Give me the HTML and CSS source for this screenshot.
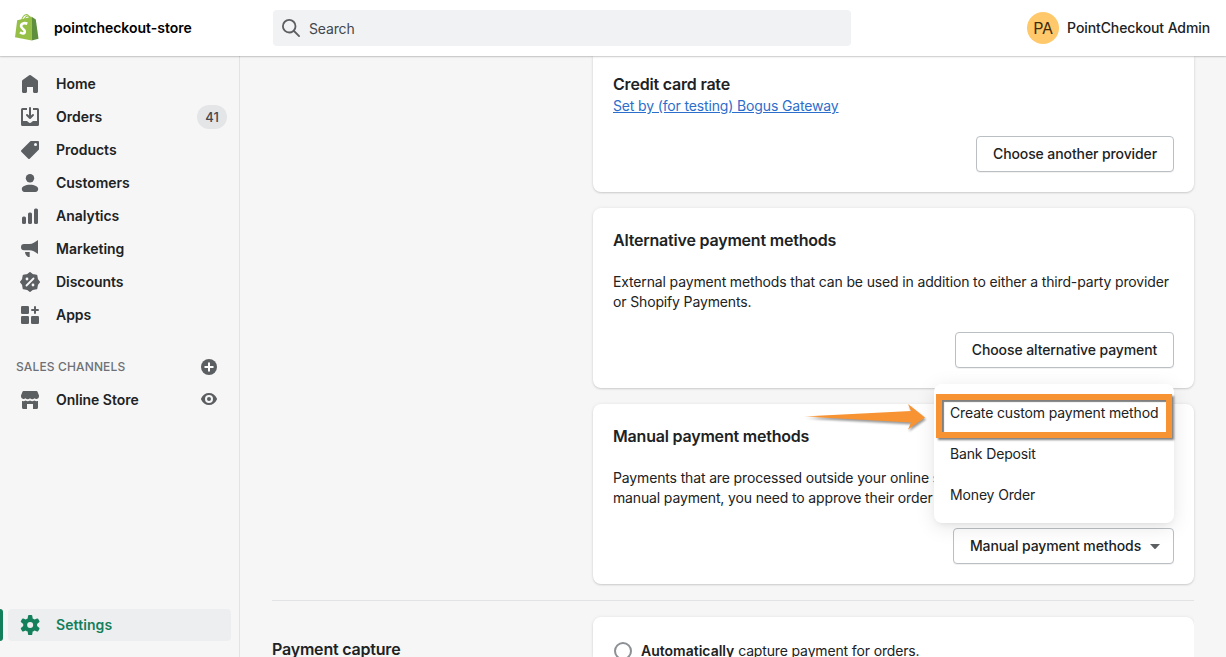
FILE: index.html
```html
<!DOCTYPE html>
<html lang="en">
<head>
<meta charset="utf-8">
<title>Payments settings</title>
<link rel="stylesheet" href="styles.css">
</head>
<body>
<header class="topbar">
  <div class="brand">
    <svg class="logo" viewBox="0 0 24 28">
      <path d="M6.500 8C7 4 9.500 1.500 11.500 1.500C13.500 1.500 14.500 4 14.500 7.500M9 8C9.500 4.500 11.500 2.500 13.500 3C15.500 3.300 16 5 16.200 7" fill="none" stroke="#95bf47" stroke-width="1.100"/>
      <path d="M2.200 7.200L16.700 3.800V27.500L0 24.300Z" fill="#95bf47"/>
      <path d="M16.700 3.800L20.800 6.400L23.500 25.800L16.700 27.500Z" fill="#5e8e3e"/>
      <path d="M12.300 10.700C8.600 9 5.700 11.200 6.200 13.600C6.700 16 10 16.200 9.800 18.700C9.600 21 7 20.900 5 19.300" fill="none" stroke="#fff" stroke-width="2.600"/>
    </svg>
    <span class="store-name">pointcheckout-store</span>
  </div>
  <div class="search">
    <svg class="icon" viewBox="0 0 20 20"><path fill-rule="evenodd" d="M2 8a6 6 0 1 1 12 0A6 6 0 0 1 2 8zm17.707 10.293-5.395-5.396A7.946 7.946 0 0 0 16 8a8 8 0 1 0-8 8 7.954 7.954 0 0 0 4.897-1.688l5.396 5.395A.998.998 0 0 0 20 19a1 1 0 0 0-.293-.707z"/></svg>
    <span class="search-text">Search</span>
  </div>
  <div class="user"><span class="avatar">PA</span><span class="user-name">PointCheckout Admin</span></div>
</header>
<div class="frame">
  <nav class="sidebar">
    <a class="item"><svg class="icon" viewBox="0 0 20 20"><path d="M18 7.261V17.500c0 .841-.672 1.500-1.500 1.500h-2c-.828 0-1.500-.659-1.500-1.500V13H7v4.477C7 18.318 6.328 19 5.500 19h-2c-.828 0-1.500-.682-1.500-1.523V7.261a1.500 1.500 0 0 1 .615-1.210l6.590-4.820a1.481 1.481 0 0 1 1.590 0l6.590 4.820A1.500 1.500 0 0 1 18 7.260z"/></svg><span>Home</span></a>
    <a class="item"><svg class="icon" viewBox="0 0 20 20"><path d="M11 1a1 1 0 1 0-2 0v7.586L7.707 7.293a1 1 0 0 0-1.414 1.414l3 3a1 1 0 0 0 1.414 0l3-3a1 1 0 0 0-1.414-1.414L11 8.586V1z"/><path d="M3 14V3h4V1H2.500A1.500 1.500 0 0 0 1 2.500v15A1.500 1.500 0 0 0 2.500 19h15a1.500 1.500 0 0 0 1.500-1.500v-15A1.500 1.500 0 0 0 17.500 1H13v2h4v11h-3.500c-.775 0-1.388.662-1.926 1.244l-.11.12A1.994 1.994 0 0 1 10 16a1.994 1.994 0 0 1-1.463-.637l-.111-.12C7.888 14.664 7.275 14 6.500 14H3z"/></svg><span>Orders</span><span class="badge">41</span></a>
    <a class="item"><svg class="icon" viewBox="0 0 20 20"><path fill-rule="evenodd" d="M10.293 1.293A1 1 0 0 1 11 1h7a1 1 0 0 1 1 1v7a1 1 0 0 1-.293.707l-9 9a1 1 0 0 1-1.414 0l-7-7a1 1 0 0 1 0-1.414l9-9zM15.500 6a1.500 1.500 0 1 0 0-3 1.500 1.500 0 0 0 0 3z"/></svg><span>Products</span></a>
    <a class="item"><svg class="icon" viewBox="0 0 20 20"><circle cx="10" cy="5.200" r="4.200"/><path d="M1.800 15.800c0-2.300 3.500-4 8.200-4s8.200 1.700 8.200 4c0 1.900-1 3.200-2.700 3.200h-11c-1.700 0-2.700-1.300-2.700-3.200z"/></svg><span>Customers</span></a>
    <a class="item"><svg class="icon" viewBox="0 0 20 20"><rect x="14" y="2.500" width="4" height="15.500" rx="1.500"/><rect x="8" y="6.500" width="4" height="11.500" rx="1.500"/><rect x="2" y="10.500" width="4" height="7.500" rx="1.500"/></svg><span>Analytics</span></a>
    <a class="item"><svg class="icon" viewBox="0 0 20 20"><path d="M18 1v14c-3-2.300-5.500-3.800-8.500-3.800H4a3 3 0 0 1-3-3V8a3 3 0 0 1 3-3h5.500c3 0 5.500-1.700 8.500-4zM5 13h4.700v5H8.300C6.500 17.300 5.300 15.500 5 13z"/></svg><span>Marketing</span></a>
    <a class="item"><svg class="icon" viewBox="0 0 20 20"><path d="M10 .8l2.600 2 3.900.7.700 3.900 2 2.600-2 2.600-.7 3.900-3.900.7-2.600 2-2.600-2-3.900-.7-.7-3.900-2-2.600 2-2.600.7-3.900 3.900-.7z" stroke="#5c5f62" stroke-width="1.600" stroke-linejoin="round"/><path d="M6.500 13.500l7-7" fill="none" stroke="#f6f6f7" stroke-width="1.800" stroke-linecap="round"/><circle cx="7" cy="7" r="1.400" fill="#f6f6f7"/><circle cx="13" cy="13" r="1.400" fill="#f6f6f7"/></svg><span>Discounts</span></a>
    <a class="item"><svg class="icon" viewBox="0 0 20 20"><rect x="1" y="1" width="8" height="8" rx="1.300"/><rect x="1" y="11" width="8" height="8" rx="1.300"/><rect x="11" y="11" width="8" height="8" rx="1.300"/><path d="M15 2v6M12 5h6" fill="none" stroke="#5c5f62" stroke-width="2" stroke-linecap="round"/></svg><span>Apps</span></a>
    <div class="section"><span>SALES CHANNELS</span><svg class="mini" viewBox="0 0 16 16"><circle cx="8" cy="8" r="8"/><path d="M8 3.500v9M3.500 8h9" fill="none" stroke="#fff" stroke-width="2"/></svg></div>
    <a class="item"><svg class="icon" viewBox="0 0 20 20"><path d="M3.500 1h13a1 1 0 0 1 .9.600L19 5.500v1a2.700 2.700 0 0 1-4.500 1.800 3 3 0 0 1-4.500 0 3 3 0 0 1-4.500 0A2.700 2.700 0 0 1 1 6.500v-1l1.600-3.900A1 1 0 0 1 3.500 1zM2 11c1.600.400 2.700 0 3.600-.600 1.500 1 2.900 1 4.400 0 1.500 1 2.900 1 4.400 0 .9.600 2 1 3.600.600v6.500a1.500 1.500 0 0 1-1.500 1.500H13v-5H7v5H3.500A1.500 1.500 0 0 1 2 17.500z"/></svg><span>Online Store</span><svg class="mini eye" viewBox="0 0 16 16"><path fill-rule="evenodd" d="M15.900 7.500C14.500 4 11.500 2 8 2S1.500 4 .1 7.500a1 1 0 0 0 0 1C1.500 12 4.500 14 8 14s6.500-2 7.900-5.500a1 1 0 0 0 0-1zM8 12a4 4 0 1 1 0-8 4 4 0 0 1 0 8z"/><circle cx="8" cy="8" r="2"/></svg></a>
    <a class="item settings"><svg class="icon" viewBox="0 0 20 20"><path fill-rule="evenodd" d="M9.027 0a1 1 0 0 0-.99.859l-.37 2.598A6.993 6.993 0 0 0 5.742 4.570l-2.437-.98a1 1 0 0 0-1.239.428L.934 5.981a1 1 0 0 0 .248 1.287l2.066 1.621a7.060 7.060 0 0 0 0 2.222l-2.066 1.621a1 1 0 0 0-.248 1.287l1.132 1.962a1 1 0 0 0 1.239.428l2.438-.979a6.995 6.995 0 0 0 1.923 1.113l.372 2.598a1 1 0 0 0 .99.859h2.265a1 1 0 0 0 .99-.859l.371-2.598a6.995 6.995 0 0 0 1.924-1.112l2.438.978a1 1 0 0 0 1.238-.428l1.133-1.962a1 1 0 0 0-.249-1.287l-2.065-1.621a7.063 7.063 0 0 0 0-2.222l2.065-1.621a1 1 0 0 0 .249-1.287l-1.133-1.962a1 1 0 0 0-1.239-.428l-2.437.979a6.994 6.994 0 0 0-1.924-1.113L12.283.86a1 1 0 0 0-.99-.859H9.027zm1.133 13a3 3 0 1 0 0-6 3 3 0 0 0 0 6z"/></svg><span>Settings</span></a>
  </nav>
  <main class="content">
    <div class="cards">
      <section class="card first">
        <h2>Credit card rate</h2>
        <a class="link">Set by (for testing) Bogus Gateway</a>
        <div class="actions"><button class="btn b1">Choose another provider</button></div>
      </section>
      <section class="card">
        <h2>Alternative payment methods</h2>
        <p>External payment methods that can be used in addition to either a third-party provider<br>or Shopify Payments.</p>
        <div class="actions"><button class="btn b2">Choose alternative payment</button></div>
      </section>
      <section class="card">
        <h2>Manual payment methods</h2>
        <p>Payments that are processed outside your online s<br>manual payment, you need to approve their order</p>
        <div class="actions">
          <button class="btn b3"><span>Manual payment methods</span><svg class="caret" viewBox="0 0 10 5"><path d="M0 0h10L5.600 4.700a.9.900 0 0 1-1.200 0z"/></svg></button>
          <div class="menu"><span>Create custom payment method</span><span>Bank Deposit</span><span>Money Order</span>
            <div class="highlight"></div>
            <svg class="arrow" viewBox="0 0 124 28"><defs><linearGradient id="fade"><stop offset="0" stop-color="#f79333" stop-opacity=".2"/><stop offset=".13" stop-color="#f79333"/></linearGradient></defs><path d="M0 13.500L108 8L105 1L122 14.500L105 26.500L108 19.500Z" fill="url(#fade)"/></svg>
          </div>
        </div>
      </section>
    </div>
    <div class="capture">
      <h2>Payment capture</h2>
      <section class="card option"><span class="radio"></span><span class="option-text"><b>Automatically</b> capture payment for orders.</span></section>
    </div>
  </main>
</div>
</body>
</html>
```
FILE: styles.css
```css
* { box-sizing: border-box; }
body { margin: 0; height: 657px; overflow: hidden; background: #f6f6f7; color: #202223; font: 400 14px/20px Inter, "Liberation Sans", sans-serif; letter-spacing: -0.145px; }
h2, p { margin: 0; }
svg { display: block; flex: none; }
.topbar { position: relative; z-index: 2; display: flex; align-items: center; height: 56px; padding: 0 16px 0 15px; background: #fff; box-shadow: 0 0 3px rgba(0,0,0,.2), 0 1px 1px rgba(0,0,0,.1); }
.brand { display: flex; align-items: center; gap: 15px; width: 258px; }
.logo { width: 24px; height: 28px; margin-top: -3px; }
.store-name { color: #000; font-weight: 600; letter-spacing: -0.01px; }
.search { display: flex; align-items: center; gap: 8px; width: 578px; height: 36px; padding: 0 8px; border-radius: 4px; background: #f1f2f4; }
.search .icon { width: 18px; height: 18px; margin: 0 1px; }
.icon, .mini { fill: #5c5f62; }
.search-text { padding-top: 2px; color: #42474c; }
.user { display: flex; align-items: center; gap: 8px; margin-left: auto; font-weight: 500; letter-spacing: -0.1px; }
.avatar { width: 32px; height: 32px; border-radius: 50%; background: #ffc96b; color: #3d2b0c; font: 400 16px/33px Inter, sans-serif; text-align: center; }
.frame { display: flex; height: 601px; overflow: hidden; }
.sidebar { display: flex; flex: none; flex-direction: column; width: 240px; padding: 12px 8px 16px; border-right: 1px solid #e1e3e5; }
.item { position: relative; display: flex; align-items: center; gap: 16px; height: 32px; margin-bottom: 1px; padding: 0 4px 0 12px; border-radius: 4px; font-weight: 600; letter-spacing: -0.03px; }
.item .icon { width: 20px; height: 20px; }
.badge { margin-left: auto; width: 30px; height: 24px; border-radius: 12px; background: #e4e5e7; color: #42474c; font-size: 13px; line-height: 24px; font-weight: 500; text-align: center; }
.section { display: flex; justify-content: space-between; align-items: center; height: 32px; margin: 19px 14px 1px 8px; color: #6d7175; font-size: 12px; font-weight: 500; letter-spacing: 0.14px; }
.mini { width: 16px; height: 16px; }
.eye { margin: -2px 10px 0 auto; }
.settings { width: 223px; margin: auto 0 0; background: #edeeef; color: #137f5b; letter-spacing: 0.08px; }
.settings .icon { fill: #137f5b; }
.settings::before { content: ""; position: absolute; left: -8px; width: 3px; height: 32px; border-radius: 0 3px 3px 0; background: #137f5b; }
.content { flex: 1; min-width: 0; padding: 0 32px; }
.cards { display: flex; flex-direction: column; gap: 16px; margin-left: 321px; padding-bottom: 16px; }
.card { height: 180px; padding: 20px; border-radius: 8px; background: #fff; box-shadow: 0 0 4px rgba(23,24,24,.06), 0 1px 2px rgba(0,0,0,.15); }
.card.first { height: 136px; padding-top: 16px; border-radius: 0 0 8px 8px; }
h2 { font-size: 16px; line-height: 24px; font-weight: 600; letter-spacing: -0.2px; }
.link { display: block; color: #2c6ecb; text-decoration: underline; }
.card p { margin-top: 20px; white-space: nowrap; }
.actions { position: relative; display: flex; justify-content: flex-end; margin-top: 20px; }
.btn { display: flex; align-items: center; justify-content: center; gap: 9px; height: 36px; padding: 0; border: 1px solid #babfc3; border-radius: 4px; background: #fff; color: #202223; font: 500 14px/20px Inter, sans-serif; letter-spacing: -0.1px; box-shadow: 0 1px 0 rgba(0,0,0,.05); white-space: nowrap; }
.b1 { width: 198px; }
.b2 { width: 219px; }
.b3 { width: 221px; padding-left: 3px; }
.caret { width: 10px; height: 5px; fill: #5c5f62; }
.menu { position: absolute; right: 0; top: -144px; display: flex; flex-direction: column; gap: 21px; width: 240px; height: 139px; padding: 19px 16px; border-radius: 8px; background: #fff; box-shadow: 0 3px 6px -3px rgba(23,24,24,.1), 0 4px 20px rgba(23,24,24,.1); white-space: nowrap; }
.highlight { position: absolute; left: 2px; top: 10px; width: 236px; height: 44px; border: 6px solid #f79333; box-shadow: 2px 2px 2px rgba(0,0,0,.5), inset 2px 2px 1px rgba(0,0,0,.5); }
.arrow { position: absolute; left: -131px; top: 19px; width: 124px; height: 28px; filter: drop-shadow(1px 2px 1px rgba(0,0,0,.4)); }
.capture { display: flex; height: 57px; overflow: hidden; border-top: 1px solid #e1e3e5; }
.capture h2 { flex: none; width: 321px; padding-top: 36px; }
.option { display: flex; gap: 10px; flex: 1; height: 40px; margin-top: 16px; padding: 24px 20px 0 21px; border-radius: 8px 8px 0 0; }
.radio { flex: none; width: 18px; height: 18px; margin-top: 1px; border: 2px solid #8c9196; border-radius: 50%; }
.option-text { margin-left: -1px; white-space: nowrap; }
.option-text b { font-weight: 600; letter-spacing: 0; }
```
